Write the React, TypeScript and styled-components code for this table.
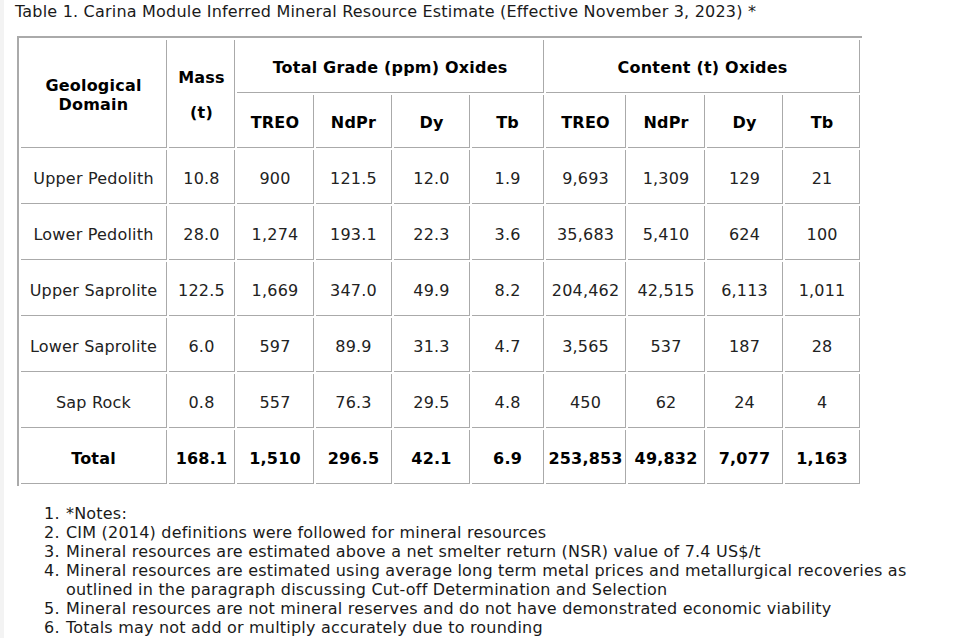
import styled, { createGlobalStyle } from "styled-components";

const GlobalStyle = createGlobalStyle`
    html, body {
        margin: 0;
        padding: 0;
        background: #fff;
    }
    body {
        font-family: "DejaVu Sans", Verdana, sans-serif;
        font-size: 16px;
        letter-spacing: 0.2px;
        color: #1a1a1a;
    }
`

const Page = styled.div`
    min-height: 100vh;
    border-left: 4px solid #f3f3f3;
    padding: 2px 0 0 11px;
    display: flex;
    flex-direction: column;
    align-items: flex-start;
`
const Caption = styled.p`
    margin: 0;
    line-height: 19px;
`
const Table = styled.table`
    margin: 15px 0 0 2px;
    table-layout: fixed;
    width: 845px;
    border-collapse: separate;
    border-spacing: 2px;
    border-top: 2px solid #aaa;
    border-left: 2px solid #aaa;
`
const Cell = styled.td<{ $bold?: boolean; $h?: number }>`
    box-sizing: border-box;
    height: ${(p) => p.$h ?? 54}px;
    padding: 3px 2px 0;
    border-right: 1px solid #aaa;
    border-bottom: 1px solid #aaa;
    text-align: center;
    vertical-align: middle;
    line-height: 19px;
    font-weight: ${(p) => (p.$bold ? 700 : 400)};
    color: ${(p) => (p.$bold ? "#000" : "#222")};
    white-space: nowrap;
`
const Stack = styled.div`
    display: flex;
    flex-direction: column;
    align-items: center;
    gap: 16px;
`
const Notes = styled.ol`
    margin: 18px 0 0;
    padding-left: 50px;
    padding-right: 40px;
    line-height: 19px;
    & li {
        padding-left: 1px;
    }
`

const widths = [146, 66, 77, 76, 76, 72, 80, 77, 76, 75]
const subHeads = ["TREO", "NdPr", "Dy", "Tb", "TREO", "NdPr", "Dy", "Tb"]

const rows = [
    ["Upper Pedolith", "10.8", "900", "121.5", "12.0", "1.9", "9,693", "1,309", "129", "21"],
    ["Lower Pedolith", "28.0", "1,274", "193.1", "22.3", "3.6", "35,683", "5,410", "624", "100"],
    ["Upper Saprolite", "122.5", "1,669", "347.0", "49.9", "8.2", "204,462", "42,515", "6,113", "1,011"],
    ["Lower Saprolite", "6.0", "597", "89.9", "31.3", "4.7", "3,565", "537", "187", "28"],
    ["Sap Rock", "0.8", "557", "76.3", "29.5", "4.8", "450", "62", "24", "4"],
]
const total = ["Total", "168.1", "1,510", "296.5", "42.1", "6.9", "253,853", "49,832", "7,077", "1,163"]

const notes = [
    "*Notes:",
    "CIM (2014) definitions were followed for mineral resources",
    "Mineral resources are estimated above a net smelter return (NSR) value of 7.4 US$/t",
    "Mineral resources are estimated using average long term metal prices and metallurgical recoveries as outlined in the paragraph discussing Cut-off Determination and Selection",
    "Mineral resources are not mineral reserves and do not have demonstrated economic viability",
    "Totals may not add or multiply accurately due to rounding",
]

export default function App() {
    return (
        <>
            <GlobalStyle />
            <Page>
                <Caption>Table 1. Carina Module Inferred Mineral Resource Estimate (Effective November 3, 2023) *</Caption>
                <Table>
                    <colgroup>
                        {widths.map((w, i) => <col key={i} style={{ width: w }} />)}
                    </colgroup>
                    <tbody>
                        <tr>
                            <Cell as="th" rowSpan={2} $bold>Geological<br />Domain</Cell>
                            <Cell as="th" rowSpan={2} $bold>
                                <Stack><span>Mass</span><span>(t)</span></Stack>
                            </Cell>
                            <Cell as="th" colSpan={4} $bold $h={53}>Total Grade (ppm) Oxides</Cell>
                            <Cell as="th" colSpan={4} $bold $h={53}>Content (t) Oxides</Cell>
                        </tr>
                        <tr>
                            {subHeads.map((h, i) => <Cell as="th" key={i} $bold $h={53}>{h}</Cell>)}
                        </tr>
                        {rows.map((r) => (
                            <tr key={r[0]}>
                                {r.map((v, i) => <Cell key={i}>{v}</Cell>)}
                            </tr>
                        ))}
                        <tr>
                            {total.map((v, i) => <Cell key={i} $bold>{v}</Cell>)}
                        </tr>
                    </tbody>
                </Table>
                <Notes>
                    {notes.map((n) => <li key={n}>{n}</li>)}
                </Notes>
            </Page>
        </>
    )
}
